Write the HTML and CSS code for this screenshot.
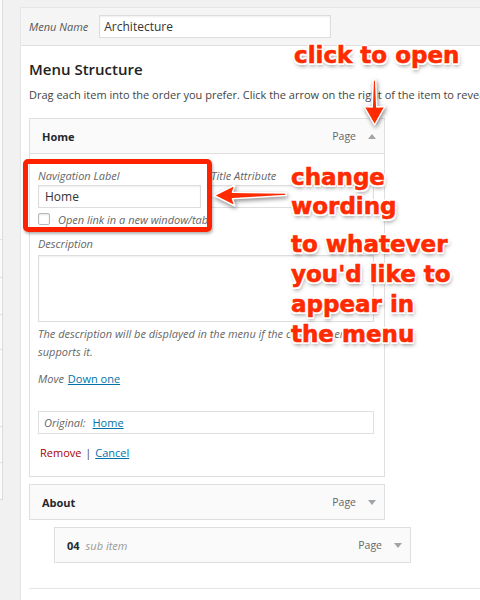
FILE: index.html
```html
<!DOCTYPE html>
<html lang="en">
<head>
    <meta charset="UTF-8">
    <meta name="viewport" content="width=device-width, initial-scale=1.0">
    <title>Menus</title>
    <link rel="stylesheet" href="styles.css">
</head>
<body>
    <div class="wrap">
        <!-- edge of the left accordion column -->
        <div class="side">
            <div class="side-part" style="height: 240px;"></div>
            <div class="side-part" style="height: 38px;"></div>
            <div class="side-part" style="height: 37px;"></div>
            <div class="side-part" style="height: 35px;"></div>
            <div class="side-part" style="height: 77px;"></div>
            <div class="side-part" style="height: 36px;"></div>
            <div class="side-part last" style="height: 37px;"></div>
        </div>

        <div class="menu-card">
            <div class="menu-header">
                <label class="menu-name-label" for="menu-name">Menu Name</label>
                <input type="text" id="menu-name" class="menu-name-input" value="Architecture">
            </div>

            <div class="menu-body">
                <h3 class="section-title">Menu Structure</h3>
                <p class="section-hint">Drag each item into the order you prefer. Click the arrow on the right of the item to reveal additional configuration options.</p>

                <!-- open item -->
                <div class="menu-item">
                    <div class="item-bar">
                        <span class="item-title">Home</span>
                        <span class="item-type">Page</span>
                        <span class="item-toggle up"></span>
                    </div>
                    <div class="item-settings">
                        <div class="field-row">
                            <div class="field">
                                <label class="field-label">Navigation Label</label>
                                <input type="text" class="field-input" value="Home">
                            </div>
                            <div class="field">
                                <label class="field-label">Title Attribute</label>
                                <input type="text" class="field-input" value="">
                            </div>
                        </div>
                        <div class="check-row">
                            <input type="checkbox" class="check">
                            <span class="check-text">Open link in a new window/tab</span>
                        </div>
                        <label class="field-label desc-label">Description</label>
                        <textarea class="field-textarea"></textarea>
                        <p class="help-text">The description will be displayed in the menu if the current theme supports it.</p>
                        <p class="move-row"><span class="move-label">Move</span> <a href="#" class="link">Down one</a></p>
                        <div class="original-box">
                            <span class="original-label">Original:</span>
                            <a href="#" class="link">Home</a>
                        </div>
                        <p class="action-row">
                            <a href="#" class="remove-link">Remove</a>
                            <span class="sep">|</span>
                            <a href="#" class="link">Cancel</a>
                        </p>
                    </div>
                </div>

                <div class="menu-item">
                    <div class="item-bar">
                        <span class="item-title">About</span>
                        <span class="item-type">Page</span>
                        <span class="item-toggle"></span>
                    </div>
                </div>

                <div class="menu-item sub">
                    <div class="item-bar">
                        <span class="item-title">04</span>
                        <span class="item-sub">sub item</span>
                        <span class="item-type">Page</span>
                        <span class="item-toggle"></span>
                    </div>
                </div>

                <div class="menu-footer-line"></div>
            </div>
        </div>
    </div>

    <!-- callouts drawn on top of the editor -->
    <div class="callout-box"></div>
    <div class="callout-text open-note">click to open</div>
    <div class="callout-text word-note">change<br>wording</div>
    <div class="callout-text rest-note">to whatever<br>you'd like to<br>appear in<br>the menu</div>

    <svg class="callout-arrows" width="480" height="600" viewBox="0 0 480 600">
        <path d="M373.2 80 L375.6 80 L376.8 107 L385 106.5 L374.6 125 L364 106.5 L372.2 107 Z"
              fill="#ff2a00" stroke="#fff" stroke-width="1.5" stroke-linejoin="round"/>
        <path d="M214 195.5 L235 185 L232.5 192.2 L286 193 L286 195.6 L232.5 198.8 L235 206 Z"
              fill="#ff2a00" stroke="#fff" stroke-width="1.5" stroke-linejoin="round"/>
    </svg>
</body>
</html>
```

FILE: styles.css
```css
body {
    margin: 0;
    height: 600px;
    overflow: hidden;
    position: relative;
    background-color: #f1f1f1;
    font-family: "Open Sans", "Noto Sans", sans-serif;
    color: #444;
}
.wrap {
    display: flex;
    align-items: flex-start;
}

/* left column edge */
.side {
    width: 2px;
    flex-shrink: 0;
    display: flex;
    flex-direction: column;
    background-color: #fbfbfb;
    border-right: 1px solid #dcdcdc;
}
.side-part {
    box-sizing: border-box;
    border-bottom: 1px solid #e1e1e1;
}
.side-part.last {
    border-bottom-color: #dcdcdc;
}

/* menu editor card */
.menu-card {
    flex-shrink: 0;
    width: 460px;
    height: 620px;
    margin-left: 17px;
    margin-top: 7px;
    background-color: #fff;
    border: 1px solid #e5e5e5;
    border-right: none;
}
.menu-header {
    display: flex;
    align-items: center;
    height: 37px;
    padding-left: 8px;
    background-color: #f5f5f5;
    border-bottom: 1px solid #dfdfdf;
}
.menu-name-label {
    font-size: 11px;
    font-style: italic;
    color: #555;
    margin-right: 11px;
}
.menu-name-input {
    box-sizing: border-box;
    width: 232px;
    height: 23px;
    padding: 0 4px;
    border: 1px solid #ddd;
    box-shadow: inset 0 1px 2px rgba(0,0,0,0.07);
    font-family: inherit;
    font-size: 12px;
    color: #333;
    outline: none;
}
.menu-body {
    padding: 0 0 0 8px;
    overflow: hidden;
}
.section-title {
    margin: 13px 0 0;
    font-size: 15px;
    line-height: 20px;
    font-weight: 600;
    color: #222;
}
.section-hint {
    margin: 8px 0 0;
    font-size: 11px;
    line-height: 16px;
    white-space: nowrap;
    overflow: hidden;
    color: #444;
}

/* menu items */
.menu-item {
    width: 356px;
    box-sizing: border-box;
    margin-top: 7px;
}
.menu-item:first-of-type {
    margin-top: 15px;
}
.menu-item.sub {
    width: 357px;
    margin-left: 25px;
}
.item-bar {
    display: flex;
    align-items: center;
    height: 36px;
    box-sizing: border-box;
    padding: 0 8px 0 12px;
    background-color: #fafafa;
    border: 1px solid #dfdfdf;
}
.item-title {
    font-size: 11px;
    font-weight: 700;
    color: #23282d;
}
.item-sub {
    margin-left: 6px;
    font-size: 11px;
    font-style: italic;
    color: #999;
}
.item-type {
    margin-left: auto;
    font-size: 10.5px;
    color: #666;
}
.item-toggle {
    width: 0;
    height: 0;
    margin-left: 12px;
    border-left: 4px solid transparent;
    border-right: 4px solid transparent;
    border-top: 5px solid #a0a5aa;
}
.item-toggle.up {
    border-top: none;
    border-bottom: 5px solid #a0a5aa;
}

/* expanded settings */
.item-settings {
    padding: 14px 10px 14px 8px;
    border: 1px solid #dfdfdf;
    border-top: none;
}
.field-row {
    display: flex;
    gap: 10px;
}
.field {
    flex: 1;
    min-width: 0;
    display: flex;
    flex-direction: column;
}
.field-label {
    display: block;
    font-size: 11px;
    line-height: 15px;
    font-style: italic;
    color: #666;
    white-space: nowrap;
}
.field-input {
    box-sizing: border-box;
    width: 100%;
    height: 23px;
    margin-top: 2px;
    padding: 0 6px;
    border: 1px solid #ddd;
    box-shadow: inset 0 1px 2px rgba(0,0,0,0.07);
    font-family: inherit;
    font-size: 12px;
    color: #333;
    outline: none;
}
.check-row {
    display: flex;
    align-items: center;
    height: 16px;
    margin-top: 3px;
}
.check {
    appearance: none;
    box-sizing: border-box;
    width: 12px;
    height: 12px;
    margin: 0 8px 0 0;
    border: 1px solid #b4b9be;
    border-radius: 2px;
    background-color: #fff;
    box-shadow: inset 0 1px 2px rgba(0,0,0,0.1);
}
.check-text {
    font-size: 11px;
    font-style: italic;
    color: #666;
    white-space: nowrap;
}
.desc-label {
    margin-top: 9px;
}
.field-textarea {
    display: block;
    box-sizing: border-box;
    width: 100%;
    height: 67px;
    margin-top: 4px;
    border: 1px solid #ddd;
    box-shadow: inset 0 1px 2px rgba(0,0,0,0.07);
    resize: none;
    outline: none;
}
.help-text {
    margin: 3px 0 0;
    font-size: 11px;
    line-height: 18px;
    font-style: italic;
    color: #666;
}
.move-row {
    margin: 9px 0 0;
    font-size: 11px;
    line-height: 18px;
}
.move-label {
    font-style: italic;
    color: #666;
    margin-right: 1px;
}
.link {
    color: #0073aa;
    text-decoration: underline;
}
.original-box {
    box-sizing: border-box;
    height: 23px;
    margin-top: 23px;
    padding: 0 5px;
    border: 1px solid #dfdfdf;
    font-size: 11px;
    line-height: 21px;
}
.original-label {
    font-style: italic;
    color: #666;
    margin-right: 4px;
}
.action-row {
    margin: 10px 0 0 2px;
    font-size: 11px;
    line-height: 18px;
}
.remove-link {
    color: #a00;
    text-decoration: none;
}
.sep {
    margin: 0 1px;
    color: #444;
}
.menu-footer-line {
    margin-top: 25px;
    border-top: 1px solid #e5e5e5;
}

/* red callouts */
.callout-box {
    position: absolute;
    left: 23px;
    top: 159px;
    width: 189px;
    height: 73px;
    box-sizing: border-box;
    border: 5px solid #ff2200;
    border-radius: 5px;
    box-shadow: 1px 2px 3px rgba(0,0,0,0.3);
}
.callout-text {
    position: absolute;
    font-family: "DejaVu Sans", sans-serif;
    font-weight: bold;
    font-size: 23px;
    line-height: 30px;
    color: #ff2a00;
    white-space: nowrap;
    -webkit-text-stroke: 0.6px #ff2a00;
    text-shadow:
        -1.5px -1.5px 0 #fff, 1.5px -1.5px 0 #fff,
        -1.5px 1.5px 0 #fff, 1.5px 1.5px 0 #fff,
        0 -2px 0 #fff, 0 2px 0 #fff, -2px 0 0 #fff, 2px 0 0 #fff,
        1px 3px 4px rgba(0,0,0,0.5);
}
.open-note {
    left: 294px;
    top: 40px;
}
.word-note {
    left: 291px;
    top: 163px;
    line-height: 29px;
}
.rest-note {
    left: 291px;
    top: 229px;
}
.callout-arrows {
    position: absolute;
    left: 0;
    top: 0;
    pointer-events: none;
    filter: drop-shadow(1px 2px 2px rgba(0,0,0,0.45));
}
```
